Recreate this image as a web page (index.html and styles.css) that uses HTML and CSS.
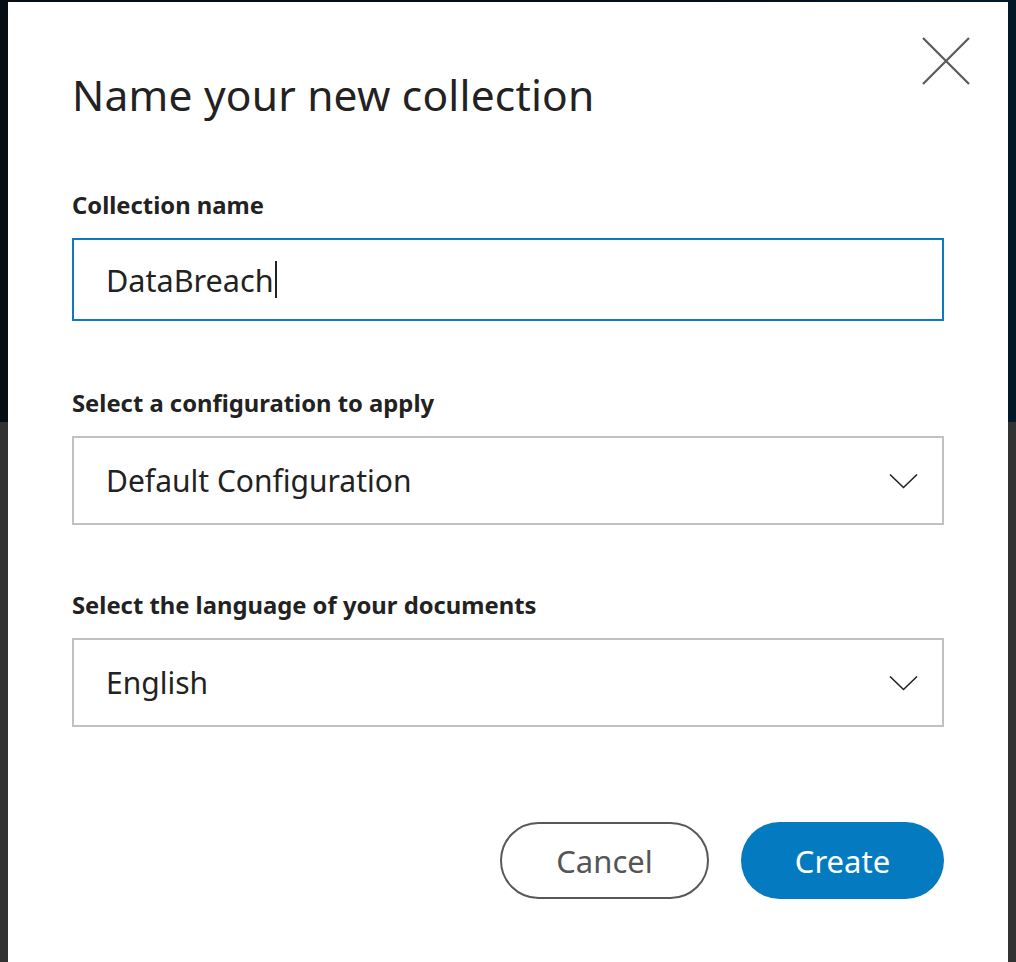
FILE: index.html
```html
<!DOCTYPE html>
<html lang="en">
<head>
<meta charset="utf-8">
<title>Name your new collection</title>
<link rel="stylesheet" href="styles.css">
</head>
<body>
<div class="backdrop">
  <div class="backdrop-top"></div>
  <div class="backdrop-bottom"></div>
</div>
<div class="modal" role="dialog">
  <button class="close" aria-label="Close">
    <svg width="50" height="50" viewBox="0 0 50 50"><path d="M2 2 L48 48 M48 2 L2 48" stroke="#5a5a5a" stroke-width="2.2" fill="none"/></svg>
  </button>
  <h1 class="title">Name your new collection</h1>
  <div class="field field-first">
    <label class="label">Collection name</label>
    <div class="input"><span class="value">DataBreach</span><span class="caret"></span></div>
  </div>
  <div class="field">
    <label class="label">Select a configuration to apply</label>
    <div class="select"><span class="value">Default Configuration</span>
      <svg class="chev" width="29" height="16" viewBox="0 0 29 16"><path d="M1 1.5 L14.5 14.5 L28 1.5" stroke="#222" stroke-width="1.6" fill="none"/></svg>
    </div>
  </div>
  <div class="field field-last">
    <label class="label">Select the language of your documents</label>
    <div class="select"><span class="value">English</span>
      <svg class="chev" width="29" height="16" viewBox="0 0 29 16"><path d="M1 1.5 L14.5 14.5 L28 1.5" stroke="#222" stroke-width="1.6" fill="none"/></svg>
    </div>
  </div>
  <div class="actions">
    <button class="btn btn-secondary">Cancel</button>
    <button class="btn btn-primary">Create</button>
  </div>
</div>
</body>
</html>
```
FILE: styles.css
```css
html, body {
  margin: 0;
  padding: 0;
  height: 100%;
  overflow: hidden;
}
body {
  font-family: "Noto Sans", "Open Sans", sans-serif;
  color: #222;
  background: #323232;
}
.backdrop {
  display: flex;
  flex-direction: column;
  height: 100%;
}
.backdrop-top {
  height: 422px;
  background: linear-gradient(to right, #060d15 0, #060d15 60%, #02192a 100%);
}
.backdrop-bottom {
  flex: 1;
  background: #323232;
}
.modal {
  position: absolute;
  left: 8px;
  top: 2px;
  width: 1000px;
  height: 1000px;
  box-sizing: border-box;
  background: #fff;
  padding: 0 64px;
}
.close {
  position: absolute;
  left: 913px;
  top: 34px;
  width: 50px;
  height: 50px;
  padding: 0;
  border: 0;
  background: none;
}
.close svg { display: block; }
.title {
  margin: 69px 0 0 0;
  font-size: 42.5px;
  line-height: 48px;
  font-weight: 400;
  color: #222;
  letter-spacing: 0.2px;
}
.field {
  display: flex;
  flex-direction: column;
  margin-top: 68px;
}
.field-first {
  margin-top: 72px;
}
.field-last {
  margin-top: 66px;
}
.label {
  font-size: 23.8px;
  line-height: 28px;
  font-weight: 700;
  color: #222;
  margin-bottom: 19px;
}
.input {
  height: 83px;
  box-sizing: border-box;
  border: 2px solid #0b7ac0;
  display: flex;
  align-items: center;
  padding-left: 32px;
  font-size: 30.6px;
  color: #222;
}
.caret {
  display: inline-block;
  width: 2px;
  height: 37px;
  background: #222;
  margin-left: 1px;
}
.select {
  height: 89px;
  box-sizing: border-box;
  border: 2px solid #c1c1c1;
  display: flex;
  align-items: center;
  justify-content: space-between;
  padding: 0 24px 0 32px;
  font-size: 30px;
  color: #222;
}
.chev { display: block; }
.actions {
  display: flex;
  justify-content: flex-end;
  gap: 32px;
  margin-top: 95px;
}
.btn {
  font-family: "Noto Sans", "Open Sans", sans-serif;
  font-size: 31px;
  height: 77px;
  border-radius: 40px;
  box-sizing: border-box;
  padding: 0;
}
.btn-secondary {
  width: 209px;
  background: #fff;
  border: 2px solid #585858;
  color: #555;
}
.btn-primary {
  width: 203px;
  background: #047bc1;
  border: 0;
  color: #fff;
}
```
